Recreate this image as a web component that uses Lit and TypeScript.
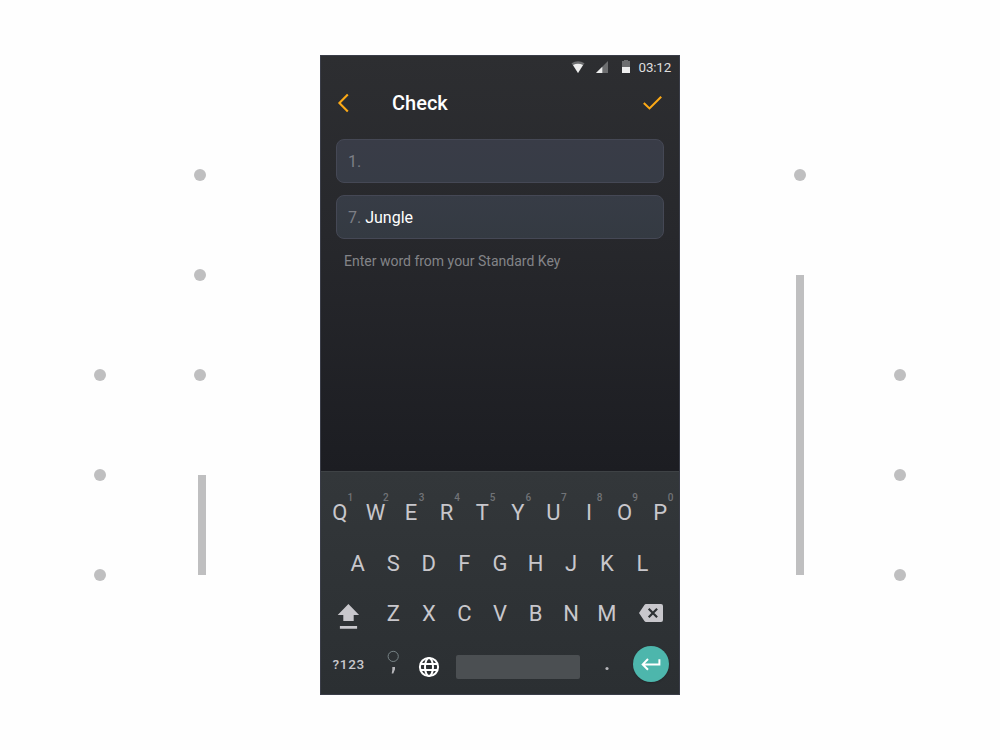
import { LitElement, html, css, svg } from "lit";
import { customElement, property } from "lit/decorators.js";

type Mark = { x: number; y: number; h?: number };

const LEFT: Mark[] = [
  { x: 200, y: 175 },
  { x: 200, y: 275 },
  { x: 200, y: 375 },
  { x: 100, y: 375 },
  { x: 100, y: 475 },
  { x: 100, y: 575 },
  { x: 202, y: 475, h: 100 },
];
const RIGHT: Mark[] = [
  { x: 120, y: 175 },
  { x: 120, y: 275, h: 300 },
  { x: 220, y: 375 },
  { x: 220, y: 475 },
  { x: 220, y: 575 },
];

@customElement("side-marks")
export class SideMarks extends LitElement {
  @property({ attribute: false }) marks: Mark[] = [];
  static styles = css`
    :host { display: block; }
    svg { display: block; fill: #bfbfc0; }
  `;
  render() {
    return html`<svg width="320" height="750" viewBox="0 0 320 750">
      ${this.marks.map((m) =>
        m.h
          ? svg`<rect x=${m.x - 4} y=${m.y} width="8" height=${m.h} />`
          : svg`<circle cx=${m.x} cy=${m.y} r="6" />`
      )}
    </svg>`;
  }
}

@customElement("key-board")
export class KeyBoard extends LitElement {
  static styles = css`
    :host {
      display: grid;
      grid-template-rows: 51px 50px 51px 50px;
      box-sizing: border-box;
      height: 223px;
      padding: 15px 1px 0;
      border-top: 1px solid #3e4245;
      background: linear-gradient(#33373a, #2b2f32);
      color: #c8c7cc;
    }
    .row { display: flex; height: 50px; justify-content: center; }
    .key {
      position: relative;
      width: 35.6px;
      font-size: 22px;
      line-height: 51px;
      text-align: center;
    }
    .digit {
      position: absolute;
      left: 22.3px;
      top: 5px;
      width: 12px;
      font-size: 10px;
      font-weight: 500;
      line-height: 12px;
      color: #717377;
    }
    .wide { display: flex; width: 53.4px; align-items: center; justify-content: center; }
    svg { display: block; overflow: visible; }
    .mode { font-size: 13.5px; letter-spacing: 0.7px; }
    .mode span { font-weight: 500; }
    .cell { display: flex; width: 35.6px; align-items: center; justify-content: center; }
    .gap { display: flex; width: 142.4px; align-items: center; justify-content: center; }
    .space { width: 124px; height: 24px; margin-top: 6px; border-radius: 2px; background: #4b4f52; }
    .globe { margin-top: 6px; }
    .enter {
      display: flex;
      width: 36px;
      height: 36px;
      border-radius: 50%;
      align-items: center;
      justify-content: center;
      background: #4db6ac;
      box-shadow: 0 1px 2px #0003;
    }
  `;
  private keys(letters: string, digits = "") {
    return [...letters].map(
      (c, i) => html`<div class="key">${c}${digits ? html`<span class="digit">${digits[i]}</span>` : ""}</div>`
    );
  }
  render() {
    return html`
      <div class="row">${this.keys("QWERTYUIOP", "1234567890")}</div>
      <div class="row">${this.keys("ASDFGHJKL")}</div>
      <div class="row">
        <div class="wide">
          <svg width="22" height="50" viewBox="0.6 0 22 50" fill="#c8c7cc">
            <path d="M11 16 21.7 27H16.3V33H5.9V27H.3ZM2.5 38H19.7V40.7H2.5Z" />
          </svg>
        </div>
        ${this.keys("ZXCVBNM")}
        <div class="wide">
          <svg width="24" height="50" viewBox="0 0 24 50">
            <path fill="#c8c7cc" d="M7 16H22a2 2 0 0 1 2 2V32a2 2 0 0 1-2 2H7q-1 0-1.6-.9L0 25l5.4-8.1Q6 16 7 16Z" />
            <path d="m9.7 20.8 8.4 8.4m0-8.4-8.4 8.4" stroke="#2e3235" stroke-width="2.2" />
          </svg>
        </div>
      </div>
      <div class="row">
        <div class="wide mode"><span>?123</span></div>
        <div class="cell">
          <svg width="12" height="50" viewBox="0 0 12 50">
            <circle cx="6.2" cy="17.4" r="5.1" fill="none" stroke="#778386" />
            <path d="M5.3 28H8V30.3L6.3 34.4H4.7L5.3 31Z" fill="#b5b5b9" />
          </svg>
        </div>
        <div class="cell">
          <svg class="globe" width="20" height="20" viewBox="0 0 20 20" fill="none" stroke="#fff" stroke-width="2">
            <circle cx="10" cy="10" r="9.1" />
            <ellipse cx="10" cy="10" rx="4" ry="9.1" />
            <path d="M1.7 7H18.3M1.7 13H18.3" />
          </svg>
        </div>
        <div class="gap"><div class="space"></div></div>
        <div class="cell">
          <svg width="6" height="50" viewBox="0 0 6 50"><circle cx="3" cy="29.5" r="1.6" fill="#b5b5b9" /></svg>
        </div>
        <div class="wide">
          <div class="enter">
            <svg width="20" height="12" viewBox="0 0 20 12" fill="none" stroke="#fff" stroke-width="2">
              <path d="M18.4 1.2V6.4H2M7 1 1.7 6.4 7 11.7" />
            </svg>
          </div>
        </div>
      </div>
    `;
  }
}

@customElement("app-root")
export class AppRoot extends LitElement {
  static styles = css`
    :host {
      display: grid;
      grid-template-columns: 320px 360px 320px;
      width: 1000px;
      height: 750px;
      overflow: hidden;
      background: #fefefe;
      font-family: Roboto, "Noto Sans", sans-serif;
    }
    .phone {
      display: flex;
      flex-direction: column;
      align-self: center;
      box-sizing: border-box;
      height: 640px;
      border: 1px solid #3a3d48;
      background: linear-gradient(#2d2e31, #27282c 28%, #1c1d22 65%);
    }
    .status {
      display: flex;
      height: 24px;
      padding-right: 8px;
      justify-content: flex-end;
      color: #dededf;
      font-size: 13.4px;
      line-height: 24px;
    }
    .time { width: 32.4px; letter-spacing: -0.2px; }
    .bar {
      display: flex;
      height: 46px;
      padding: 0 17.5px 0 16px;
      align-items: center;
    }
    .title {
      flex: 1;
      margin-left: 43px;
      color: #fff;
      font-size: 20px;
      font-weight: 500;
      line-height: 24px;
    }
    .form { display: flex; flex: 1; flex-direction: column; gap: 12px; padding: 13px 15px 0; }
    .field {
      box-sizing: border-box;
      height: 44px;
      padding-left: 11px;
      border: 1px solid #454855;
      border-radius: 8px;
      background: linear-gradient(#393c47, #373c46);
      color: #fff;
      font-size: 16px;
      line-height: 43px;
    }
    .filled { background: linear-gradient(#373c46, #343a42); }
    .num { color: #7d7f86; }
    .help { padding-left: 8px; color: #838488; font-size: 14px; line-height: 20px; }
    svg { display: block; }
  `;
  render() {
    return html`
      <side-marks .marks=${LEFT}></side-marks>
      <div class="phone">
        <div class="status">
          <svg width="68" height="24" viewBox="571 56 68 24">
            <path fill="#6d6e70" d="M571.5 63.3Q578 59.3 584.5 63.3L578 73Z" />
            <path fill="#eee" d="M573 65.1Q578 62.5 583 65.1L578 73Z" />
            <path fill="#6d6e70" d="M608 61V73H596Z" />
            <path fill="#eee" d="M602.3 66.7V73H596Z" />
            <path fill="#6d6e70" d="M624 60H628V61H630V68H622V61H624Z" />
            <path fill="#eee" d="M622 67H630V73H622Z" />
          </svg>
          <span class="time">03:12</span>
        </div>
        <div class="bar">
          <svg width="12" height="20" viewBox="0 0 12 20" fill="none" stroke="#fca916" stroke-width="2.1">
            <path d="M10.8 1.4 2.4 10 10.8 18.6" />
          </svg>
          <div class="title">Check</div>
          <svg width="20" height="16" viewBox="0 0 20 16" fill="none" stroke="#fca916" stroke-width="2.1">
            <path d="M1.8 8 7.5 13.4 19.2 1.7" />
          </svg>
        </div>
        <div class="form">
          <div class="field"><span class="num">1.</span></div>
          <div class="field filled"><span class="num">7.</span> Jungle</div>
          <div class="help">Enter word from your Standard Key</div>
        </div>
        <key-board></key-board>
      </div>
      <side-marks .marks=${RIGHT}></side-marks>
    `;
  }
}
